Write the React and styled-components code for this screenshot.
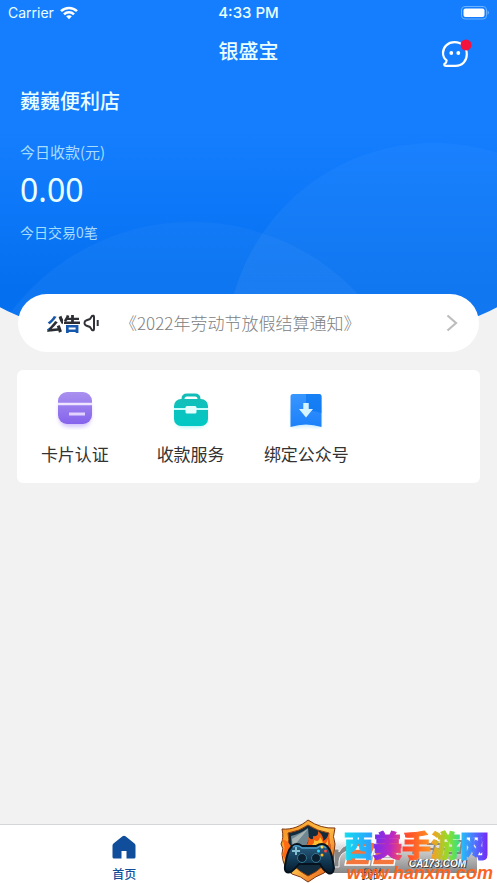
import React from 'react';
import styled, { createGlobalStyle } from 'styled-components';

const GlobalStyle = createGlobalStyle`
  * { box-sizing: border-box; }
  body {
    margin: 0;
    background: #f2f2f2;
    font-family: "Noto Sans CJK SC", "Noto Sans", sans-serif;
  }
  button { border: 0; padding: 0; background: none; font: inherit; color: inherit; cursor: pointer; }
  svg { display: block; flex: none; }
  h1, h2, p { margin: 0; font-weight: 500; }
`;

const Page = styled.div`
  position: relative;
  display: flex;
  flex-direction: column;
  min-height: 100vh;
  overflow: hidden;
`;

const Backdrop = styled.div`
  position: absolute;
  top: 0;
  left: -6%;
  width: 112%;
  height: 350px;
  overflow: hidden;
  border-radius: 0 0 50% 50% / 0 0 78px 78px;
  background: linear-gradient(#147eff 0, #147eff 130px, #0470f0 290px, #0470f0 100%);
`;

const Orb = styled.span`
  position: absolute;
  left: ${(p) => p.$left};
  top: ${(p) => p.$top}px;
  width: ${(p) => p.$size}px;
  height: ${(p) => p.$size}px;
  border-radius: 50%;
  background: linear-gradient(rgba(255, 255, 255, 0.03), rgba(255, 255, 255, 0.06) 50%);
`;

const StatusBar = styled.div`
  position: relative;
  display: grid;
  grid-template-columns: 1fr auto 1fr;
  align-items: center;
  height: 26px;
  padding: 0 8px;
  color: #eaffff;
  font: 14px/26px Inter, sans-serif;
`;

const Carrier = styled.div`
  display: flex;
  align-items: center;
  gap: 6px;
`;

const Clock = styled.span`
  font-size: 15px;
  font-weight: 500;
`;

const BatterySlot = styled.div`
  display: flex;
  justify-content: flex-end;
`;

const TitleBar = styled.header`
  position: relative;
  display: grid;
  grid-template-columns: 1fr auto 1fr;
  align-items: center;
  height: 50px;
  padding: 0 24px;
  color: #eaffff;
`;

const Title = styled.h1`
  grid-column: 2;
  font-size: 20px;
  line-height: 50px;
`;

const MessageButton = styled.button`
  justify-self: end;
  margin-top: 4px;
`;

const Summary = styled.section`
  position: relative;
  padding: 10px 20px 0;
  color: #eaffff;
`;

const ShopName = styled.h2`
  font-size: 20px;
  line-height: 30px;
`;

const Note = styled.p`
  font-size: ${(p) => (p.$small ? 14 : 15)}px;
  line-height: 24px;
  font-weight: 400;
  color: #a8dcff;
`;

const AmountBlock = styled.div`
  padding-top: 24px;
`;

const Amount = styled.p`
  padding: 3px 0 7px;
  font: 400 32px/46px "Noto Sans", sans-serif;
`;

const Notice = styled.button`
  position: relative;
  display: flex;
  align-items: center;
  height: 58px;
  margin: 50px 18px 0;
  padding: 0 20px 0 27px;
  border-radius: 29px;
  background: #fff;
  text-align: left;
`;

const NoticeTag = styled.span`
  display: flex;
  align-items: center;
  gap: 2px;
  width: 75px;
`;

const TagText = styled.span`
  display: flex;
`;

const TagChar = styled.span`
  font-size: 18px;
  font-weight: 900;
  line-height: 24px;
  font-style: ${(p) => (p.$slanted ? 'italic' : 'normal')};
  color: transparent;
  background: ${(p) => p.$fill};
  background-clip: text;
  -webkit-background-clip: text;
`;

const NoticeText = styled.span`
  flex: 1;
  font-size: 17px;
  font-weight: 300;
  line-height: 26px;
  color: #808080;
`;

const Services = styled.nav`
  position: relative;
  display: grid;
  grid-template-columns: repeat(4, 1fr);
  margin: 18px 17px 0;
  padding: 17px 0 16px;
  border-radius: 6px;
  background: #fff;
`;

const Service = styled.button`
  display: flex;
  flex-direction: column;
  align-items: center;
  gap: 10px;
  font-size: 17px;
  line-height: 26px;
  color: #333;
  white-space: nowrap;
`;

const TabBar = styled.nav`
  display: flex;
  height: 59px;
  margin-top: auto;
  border-top: 1px solid #d4d6d8;
  background: #fff;
`;

const Tab = styled.button`
  flex: 1;
  display: flex;
  flex-direction: column;
  align-items: center;
  justify-content: flex-end;
  gap: 6px;
  font-size: 12px;
  line-height: 18px;
  font-weight: ${(p) => (p.$active ? 500 : 400)};
  color: ${(p) => (p.$active ? '#104d9b' : '#333')};
`;

const Watermark = styled.aside`
  position: absolute;
  right: 0;
  bottom: 0;
  width: 217px;
  height: 64px;
`;

const Shield = styled.div`
  position: absolute;
  left: 0;
  top: 0;
`;

const Plate = styled.div`
  position: absolute;
  right: 20px;
  bottom: 10px;
  display: flex;
  align-items: flex-end;
  justify-content: flex-end;
  width: 148px;
  height: 34px;
  padding: 0 11px 3px 0;
  background: linear-gradient(rgba(70, 70, 70, 0), rgba(70, 70, 70, 0.3) 40%, rgba(70, 70, 70, 0.65));
`;

const PlateArt = styled.div`
  position: absolute;
  left: 0;
  bottom: 4px;
`;

const PlateText = styled.span`
  position: relative;
  font: italic 700 10px/12px "Liberation Sans", sans-serif;
  color: #fff;
  text-shadow: 1px 1px 0 #444, -1px 0 0 #444;
`;

const Brand = styled.span`
  position: absolute;
  right: 8px;
  top: 5px;
  font-size: 29px;
  line-height: 40px;
  font-weight: 900;
  white-space: nowrap;
`;

const BrandChar = styled.span`
  color: transparent;
  background: ${(p) => p.$fill};
  background-clip: text;
  -webkit-background-clip: text;
  -webkit-text-stroke: 1px transparent;
`;

const Site = styled.span`
  position: absolute;
  right: 4px;
  bottom: 0;
  font: italic 700 18px/20px "Liberation Sans", sans-serif;
  color: #fb641f;
`;

const WifiIcon = () => (
  <svg width="18" height="14" viewBox="0 0 18 14" fill="none" stroke="#fff" strokeWidth="2.5">
    <path d="M1 5.2C5.4.8 12.6.8 17 5.2" />
    <path d="M4 8.3c2.8-2.8 7.2-2.8 10 0" />
    <path d="M6.2 10.2c1.6-1.4 4-1.4 5.6 0L9 13.2z" fill="#fff" stroke="none" />
  </svg>
);

const BatteryIcon = () => (
  <svg width="28" height="14" viewBox="0 0 28 14">
    <rect x=".5" y=".5" width="25" height="12.5" rx="3.5" fill="none" stroke="#6db2ff" />
    <rect x="2.5" y="2.5" width="21" height="8.5" rx="2" fill="#fff" />
    <path d="M26.700 4.500q2 2.200 0 4.400z" fill="#8cc5ff" />
  </svg>
);

const MessageIcon = () => (
  <svg width="32" height="30" viewBox="0 0 32 30">
    <path d="M13.5 4.2C6.8 4.200 2 9 2 15c0 3.300 1.200 5.500 3.600 7.300Q5.800 24.500 3.300 26.200Q3 27.900 5 27.900H14.500C21.500 27.900 25.800 22.800 25.800 16.200 25.800 9.200 20.800 4.200 13.500 4.200z" fill="none" stroke="#fff" strokeWidth="2.200" strokeLinejoin="round" />
    <circle cx="10.300" cy="15" r="1.900" fill="#fff" />
    <circle cx="17.300" cy="15" r="1.900" fill="#fff" />
    <circle cx="25" cy="7" r="5.500" fill="#f4123f" />
  </svg>
);

const SpeakerIcon = () => (
  <svg width="16" height="18" viewBox="0 0 16 18" fill="none" stroke="#303238" strokeWidth="2" strokeLinejoin="round">
    <path d="M3 6.500L7 5L9 2Q11 1 11 3V15Q11 17 9 16L7 13L3 11.500Q1.500 11 1.500 9Q1.500 7 3 6.500z" />
    <path d="M14.700 6V12" />
  </svg>
);

const ChevronIcon = () => (
  <svg width="14" height="20" viewBox="0 0 14 20" fill="none" stroke="#bdbdbd" strokeWidth="2.200">
    <path d="M2.500 2.500L11 10L2.500 17.500" />
  </svg>
);

const CardIcon = () => (
  <svg width="42" height="44" viewBox="0 0 42 44">
    <defs>
      <linearGradient id="card" x1="0" y1="0" x2="0" y2="1">
        <stop stopColor="#aa90ef" />
        <stop offset="1" stopColor="#8564ec" />
      </linearGradient>
      <filter id="soft"><feGaussianBlur stdDeviation="2" /></filter>
    </defs>
    <rect x="5" y="12" width="32" height="28" rx="9" fill="#a78bf7" opacity=".5" filter="url(#soft)" />
    <rect x="4" y="5" width="34" height="32" rx="9" fill="url(#card)" />
    <path d="M4 17h34" stroke="#eee5ff" strokeWidth="2.500" />
    <path d="M15 27h16" stroke="#e0d3ff" strokeWidth="3" />
  </svg>
);

const BriefcaseIcon = () => (
  <svg width="42" height="44" viewBox="0 0 42 44">
    <defs>
      <linearGradient id="case" x1="0" y1="0" x2="0" y2="1">
        <stop stopColor="#13bfb9" />
        <stop offset="1" stopColor="#02c8c5" />
      </linearGradient>
    </defs>
    <rect x="6" y="18" width="30" height="22" rx="7" fill="#48e8e7" opacity=".5" filter="url(#soft)" />
    <path d="M13 15v-3q0-4 4-4h8q4 0 4 4v3" fill="none" stroke="#12bdb7" strokeWidth="3" />
    <rect x="4" y="12" width="34" height="27" rx="7" fill="url(#case)" />
    <path d="M4 22h34" stroke="#c4fffd" strokeWidth="2" />
    <rect x="15.500" y="19" width="11" height="7.500" rx="1.500" fill="#e5ffff" />
  </svg>
);

const BookmarkIcon = () => (
  <svg width="42" height="44" viewBox="0 0 42 44">
    <defs>
      <linearGradient id="book" x1="0" y1="0" x2="0" y2="1">
        <stop stopColor="#3896ff" />
        <stop offset="1" stopColor="#1c80fa" />
      </linearGradient>
    </defs>
    <path d="M7 20h28v20q-14-3-28 0z" fill="#5ac4ff" opacity=".5" filter="url(#soft)" />
    <path d="M8 7h26q2.500 0 2.500 2.500V40Q21 35 5.500 40V9.500Q5.500 7 8 7z" fill="url(#book)" />
    <path d="M21 7h13q2.500 0 2.500 2.500V26L27.900 24H23.700V17H21z" fill="#0874ef" opacity=".65" />
    <path d="M18.300 16h5.400v6h4.300L21 30.500 14 22h4.300z" fill="#d5f4ff" />
  </svg>
);

const HomeIcon = () => (
  <svg width="24" height="24" viewBox="0 0 24 24">
    <path d="M.5 10.500Q.5 9.300 1.500 8.500L10.500 1.200Q12 .1 13.500 1.200L22.500 8.500Q23.500 9.300 23.500 10.500V22Q23.500 23.500 22 23.500H14.500V16H9.500V23.500H2Q.5 23.500.5 22z" fill="#104d9b" />
  </svg>
);

const ShieldIcon = () => (
  <svg width="58" height="65" viewBox="0 0 58 65">
    <defs>
      <linearGradient id="rim" x1="0" y1="0" x2="1" y2="1">
        <stop stopColor="#f48a1c" />
        <stop offset=".5" stopColor="#ffc34a" />
        <stop offset="1" stopColor="#df4b10" />
      </linearGradient>
      <linearGradient id="pad" x1="0" y1="0" x2="0" y2="1">
        <stop stopColor="#2b6285" />
        <stop offset=".6" stopColor="#103650" />
        <stop offset="1" stopColor="#071a2b" />
      </linearGradient>
    </defs>
    <path d="M28 1C21 7 12 11 2 10Q4 19 1 25Q4 29 2 35Q3 49 12 55Q21 57 28 63Q36 57 44 54Q54 47 54 33L55 25Q52 18 55 9Q41 10 28 1z" fill="url(#rim)" stroke="#7d3511" />
    <path d="M28 6Q20 12 8 14Q10 21 7 27V36Q11 48 28 57Q46 49 50 34V26Q47 20 49 14Q37 12 28 6z" fill="#122c3d" stroke="#913e10" />
    <path d="M28 9Q20 15 11 17L12 30H25L29 20z" fill="#6f8791" />
    <path d="M12 20L28 10L13 28z" fill="#a9b5b5" />
    <path d="M24 27Q30 25 28 18Q34 23 33 17Q39 18 38 12Q44 17 43 22Q48 19 49 14L51 34H24z" fill="#f35d12" />
    <path d="M29 28Q35 25 34 21Q39 24 40 18Q44 23 42 27Q47 25 48 20V33H29z" fill="#ffc12f" />
    <path d="M2 36Q7 29 2 20Q11 23 12 31L9 46z" fill="#ff6b14" />
    <path d="M12 27Q17 23 22 27H36Q42 23 47 27Q52 32 54 49Q53 56 48 54Q43 51 40 45H19Q15 50 11 53Q4 55 5 47Q7 32 12 27z" fill="url(#pad)" stroke="#06131e" strokeWidth="2" />
    <path d="M13 28Q18 25 22 29H37Q42 25 46 29" fill="none" stroke="#4b9dc7" strokeWidth="1.500" />
    <path d="M16 28v8M12 32h8" stroke="#87bfd2" strokeWidth="2" />
    <circle cx="22" cy="39" r="4.500" fill="#0b2131" stroke="#367593" />
    <circle cx="36" cy="39" r="4.500" fill="#0b2131" stroke="#367593" />
    <circle cx="42" cy="28" r="1.500" fill="#ffd94c" />
    <circle cx="45.500" cy="32" r="1.500" fill="#ff493c" />
    <circle cx="38.500" cy="32" r="1.500" fill="#2bd5ff" />
    <circle cx="42" cy="36" r="1.500" fill="#ffbd24" />
  </svg>
);

const PlateLogo = () => (
  <svg width="138" height="32" viewBox="0 0 138 32">
    <path d="M5 30V12h5v3Q14 8 20 8v6Q11 15 10 24v6z" fill="#878787" stroke="#eee" />
    <path d="M25 5H43Q47 5 46 10L44 15Q43 19 39 19H28L27 22H41L40 28H16L19 16Q20 12 24 12H36L37 10H23zM49 5H68Q72 5 71 10L69 15Q68 19 64 19H54L53 22H66L65 28H43L46 16Q47 12 51 12H61L62 10H47z" fill="#f4763c" stroke="#fff" strokeWidth="1.500" />
    <path d="M79 6h18M75 13h22M87 3l-3 14M98 7h20M96 12h20M107 3l-3 14M121 4h12l-2 12h-13" fill="none" stroke="#888" strokeWidth="2" />
  </svg>
);

const services = [
  { label: '卡片认证', Icon: CardIcon },
  { label: '收款服务', Icon: BriefcaseIcon },
  { label: '绑定公众号', Icon: BookmarkIcon },
];

const brand = [
  ['西', 'linear-gradient(90deg, #12dded, #2d9cff)'],
  ['美', 'linear-gradient(100deg, #5d2cff, #bd29c0 60%, #ff5148)'],
  ['手', 'linear-gradient(90deg, #ff3d30, #ff931e)'],
  ['游', 'linear-gradient(90deg, #ff9a22, #8dde28 60%, #30e090)'],
  ['网', 'linear-gradient(90deg, #20c7f5, #526aff 55%, #7a20f4)'],
];

export default function App() {
  return (
    <>
      <GlobalStyle />
      <Page>
        <Backdrop>
          <Orb $left="-1%" $top={222} $size={454} />
          <Orb $left="46%" $top={143} $size={416} />
        </Backdrop>
        <StatusBar>
          <Carrier>Carrier <WifiIcon /></Carrier>
          <Clock>4:33 PM</Clock>
          <BatterySlot><BatteryIcon /></BatterySlot>
        </StatusBar>
        <TitleBar>
          <Title>银盛宝</Title>
          <MessageButton aria-label="消息"><MessageIcon /></MessageButton>
        </TitleBar>
        <Summary>
          <ShopName>巍巍便利店</ShopName>
          <AmountBlock>
            <Note>今日收款(元)</Note>
            <Amount>0.00</Amount>
            <Note $small>今日交易0笔</Note>
          </AmountBlock>
        </Summary>
        <Notice>
          <NoticeTag>
            <TagText>
              <TagChar $slanted $fill="linear-gradient(120deg, #1658ab 45%, #2b2d33 45%)">公</TagChar>
              <TagChar $fill="linear-gradient(#2b2d33 56%, #1658ab 56%)">告</TagChar>
            </TagText>
            <SpeakerIcon />
          </NoticeTag>
          <NoticeText>《2022年劳动节放假结算通知》</NoticeText>
          <ChevronIcon />
        </Notice>
        <Services>
          {services.map(({ label, Icon }) => (
            <Service key={label}><Icon />{label}</Service>
          ))}
        </Services>
        <TabBar>
          <Tab $active><HomeIcon />首页</Tab>
          <Tab>我的</Tab>
        </TabBar>
        <Watermark>
          <Plate>
            <PlateArt><PlateLogo /></PlateArt>
            <PlateText>CA173.COM</PlateText>
          </Plate>
          <Shield><ShieldIcon /></Shield>
          <Brand>
            {brand.map(([char, fill]) => <BrandChar key={char} $fill={fill}>{char}</BrandChar>)}
          </Brand>
          <Site>www.hanxm.com</Site>
        </Watermark>
      </Page>
    </>
  );
}
